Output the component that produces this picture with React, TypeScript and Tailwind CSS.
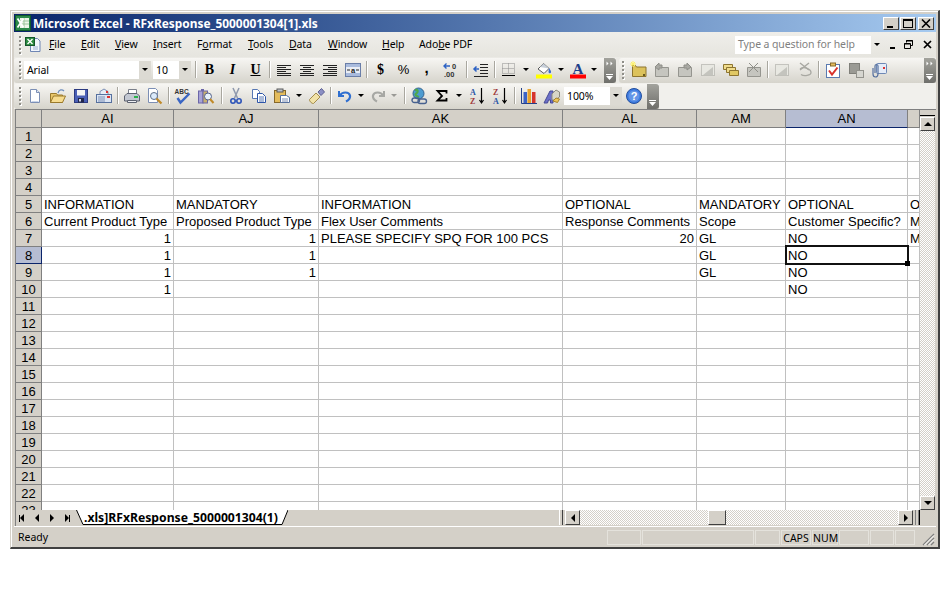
import type { ReactNode } from "react";

const COLS = [
  { name: "AI", w: "w-[132px]" },
  { name: "AJ", w: "w-[145px]" },
  { name: "AK", w: "w-[244px]" },
  { name: "AL", w: "w-[134px]" },
  { name: "AM", w: "w-[89px]" },
  { name: "AN", w: "w-[122px]" },
  { name: "", w: "w-[12px]" },
];

type Cell = string | { n: string };

const ROWS: Record<number, Cell[]> = {
  5: ["INFORMATION", "MANDATORY", "INFORMATION", "OPTIONAL", "MANDATORY", "OPTIONAL", "O"],
  6: ["Current Product Type", "Proposed Product Type", "Flex User Comments", "Response Comments", "Scope", "Customer Specific?", "M"],
  7: [{ n: "1" }, { n: "1" }, "PLEASE SPECIFY SPQ FOR 100 PCS", { n: "20" }, "GL", "NO", "M"],
  8: [{ n: "1" }, { n: "1" }, "", "", "GL", "NO", ""],
  9: [{ n: "1" }, { n: "1" }, "", "", "GL", "NO", ""],
  10: [{ n: "1" }, "", "", "", "", "NO", ""],
};

const ROW_NUMBERS = Array.from({ length: 23 }, (_, i) => i + 1);

function Ico({ children }: { children: ReactNode }) {
  return (
    <svg width="16" height="16" viewBox="0 0 16 16" className="block shrink-0 overflow-visible">
      {children}
    </svg>
  );
}

function Btn({ children, w = "w-[23px]" }: { children: ReactNode; w?: string }) {
  return <div className={`flex h-full shrink-0 items-center justify-center ${w}`}>{children}</div>;
}

function Sep() {
  return <div className="mx-[2px] h-[17px] w-[1px] shrink-0 bg-[#a9a79f] shadow-[1px_0_0_#fff]" />;
}

function Caret({ w = "w-[12px]", light = false }: { w?: string; light?: boolean }) {
  return (
    <div className={`flex h-full shrink-0 items-center justify-center ${w}`}>
      <div className={`h-0 w-0 border-x-[3px] border-t-[3px] border-x-transparent ${light ? "border-t-[#9a9a96]" : "border-t-black"}`} />
    </div>
  );
}

function Gripper({ mr = "mr-[3px]" }: { mr?: string }) {
  return (
    <div className={`ml-[3px] flex shrink-0 flex-col gap-[2px] ${mr}`}>
      {[0, 1, 2, 3, 4].map((i) => (
        <div key={i} className="h-[2px] w-[2px] bg-[#8f8e88] shadow-[1px_1px_0_#fff]" />
      ))}
    </div>
  );
}

function Chevron({ small = false }: { small?: boolean }) {
  return (
    <div className="-mb-[2px] flex h-[25px] w-[12px] shrink-0 justify-center rounded-r-[3px] bg-gradient-to-b from-[#a3a39d] to-[#6f6f6b]">
      <svg width="12" height="25" viewBox="0 0 12 25" className="block">
        {!small && <path d="M2.500 3.500l2 2-2 2zM6.500 3.500l2 2-2 2z" fill="#fff" />}
        <path d="M2 16.500h7" stroke="#fff" />
        <path d="M2 18h7l-3.500 4z" fill="#fff" />
      </svg>
    </div>
  );
}

function Combo({ w, label }: { w: string; label: string }) {
  return (
    <div className={`flex h-[18px] shrink-0 items-stretch bg-white ${w}`}>
      <div className="flex-1 pl-[3px] font-['Noto_Sans',sans-serif] text-[10.5px] leading-[18px] tracking-[-0.1px] text-black">{label}</div>
      <div className="flex w-[12px] items-center justify-center bg-[#dcdad3]">
        <div className="h-0 w-0 border-x-[3px] border-t-[3px] border-x-transparent border-t-black" />
      </div>
    </div>
  );
}

/* ---- icons, office 2003 look ---- */
const IconNew = () => (
  <Ico>
    <path d="M3.500 1.500h6l3 3v10h-9z" fill="#fff" stroke="#7c8fb5" />
    <path d="M9.500 1.500v3h3" fill="#dfe7f5" stroke="#7c8fb5" />
    <path d="M4.500 13.500h7" stroke="#c6d3ea" />
  </Ico>
);
const IconOpen = () => (
  <Ico>
    <path d="M.5 14.500v-9h6l1 1.500h5v7.500z" fill="#e8c66a" stroke="#9a7a2c" />
    <path d="M.5 14.500l3-6.500h12l-3 6.500z" fill="#f7dc8f" stroke="#9a7a2c" />
    <path d="M8 5c1-3.500 4-4 6-2" fill="none" stroke="#6f8fbd" strokeWidth="1.300" />
  </Ico>
);
const IconSave = () => (
  <Ico>
    <rect x="1.500" y="1.500" width="13" height="13" fill="#4a5fb5" stroke="#2c3a80" />
    <rect x="4" y="2" width="8" height="5.500" fill="#f4f4f4" />
    <rect x="5" y="10" width="6" height="4.500" fill="#20264a" />
    <rect x="6" y="11" width="2" height="2.500" fill="#cfd3e5" />
  </Ico>
);
const IconMail = () => (
  <Ico>
    <path d="M4 7V3.500l4-2.500 4 2.500V7" fill="#e7edf6" stroke="#7c8fb5" />
    <rect x="10" y="3" width="2" height="2" fill="#d33" />
    <rect x=".5" y="6.500" width="15" height="8" fill="#dbe5f4" stroke="#56709e" />
    <path d="M2 9h7M2 11h7M2 13h7" stroke="#7c8fb5" />
    <rect x="11" y="8" width="3" height="2" fill="#d33" />
  </Ico>
);
const IconPrint = () => (
  <Ico>
    <path d="M4.500 6.500V1.500h8v5" fill="#fff" stroke="#7a7f8a" />
    <path d="M.5 8l2.500-2.500h10L15.500 8v5H.5z" fill="#c3c8d2" stroke="#5c6270" />
    <rect x="10" y="8" width="4" height="2" fill="#29b34a" />
    <path d="M3.500 12.500h9v2h-9z" fill="#eef0f4" stroke="#5c6270" />
  </Ico>
);
const IconPreview = () => (
  <Ico>
    <path d="M1.500 .5h7l2 2v12h-9z" fill="#fff" stroke="#7c8fb5" />
    <circle cx="7" cy="8" r="3.500" fill="#dbeafa" stroke="#5f6f88" />
    <path d="M9.500 10.500l5 5" stroke="#c08a2a" strokeWidth="2.200" />
  </Ico>
);
const IconSpell = () => (
  <Ico>
    <text x="-.5" y="5.500" fontFamily="Liberation Sans" fontSize="6.500" fontWeight="700" fill="#333">ABC</text>
    <path d="M2.500 10l3 4.500 9-9" fill="none" stroke="#3a66c4" strokeWidth="2.400" />
  </Ico>
);
const IconResearch = () => (
  <Ico>
    <rect x=".5" y="3" width="4.500" height="12" fill="#a7a3d6" stroke="#6b66a8" />
    <rect x="5" y="3" width="4.500" height="12" fill="#c7b06e" stroke="#6b66a8" />
    <rect x="3" y="1" width="3" height="2" fill="#6b66a8" />
    <circle cx="10" cy="8.500" r="3.500" fill="#e7f2fb" stroke="#55628a" />
    <path d="M12 11l3.500 4" stroke="#c08a2a" strokeWidth="2" />
  </Ico>
);
const IconCut = () => (
  <Ico>
    <path d="M5 0l4.500 10M11 0L6.500 10" stroke="#8f99ad" strokeWidth="1.500" />
    <circle cx="5" cy="13" r="2.200" fill="none" stroke="#2e55b8" strokeWidth="1.600" />
    <circle cx="11" cy="13" r="2.200" fill="none" stroke="#2e55b8" strokeWidth="1.600" />
  </Ico>
);
const IconCopy = () => (
  <Ico>
    <path d="M1.500 1.500h5l2 2v7h-7z" fill="#fff" stroke="#5878b4" />
    <path d="M6.500 5.500h5l3 3v6h-8z" fill="#fff" stroke="#2d55a8" />
    <path d="M8 9h5M8 11h5M8 13h5" stroke="#5878b4" />
  </Ico>
);
const IconPaste = () => (
  <Ico>
    <rect x=".5" y="2.500" width="11" height="12" fill="#e4bc5c" stroke="#86682a" />
    <rect x="3" y="1" width="6" height="3" fill="#bfc4cc" stroke="#5a5a5a" />
    <path d="M6.500 7.500h6l3 2v5h-9z" fill="#fff" stroke="#56709e" />
    <path d="M8 11h6M8 13h6" stroke="#7c8fb5" />
  </Ico>
);
const IconPainter = () => (
  <Ico>
    <path d="M.5 11.500L7 5l4 4-6.500 6.500c-1.500 .5-4.500-2.500-4-4z" fill="#f1e2a8" stroke="#a38c4d" />
    <path d="M9 4l3.500-3.500L15.500 4 12 7.500z" fill="#8b8fc4" stroke="#5c5f92" />
  </Ico>
);
const IconUndo = ({ gray = false }: { gray?: boolean }) => {
  const c = gray ? "#a7a8a4" : "#2f6fd0";
  return (
    <Ico>
      <path d="M2 3v5h5" fill="none" stroke={c} strokeWidth="2" />
      <path d="M3 7.500C5 3.500 12 3.500 13 7.500c.5 2.500-1 4.500-4 6" fill="none" stroke={c} strokeWidth="2.200" />
    </Ico>
  );
};
const IconRedo = () => (
  <div className="-scale-x-100">
    <IconUndo gray />
  </div>
);
const IconLink = () => (
  <Ico>
    <circle cx="7.500" cy="5.500" r="5.500" fill="#4d9bd0" stroke="#33638f" />
    <path d="M4 2.500c2-1.500 3 0 2.500 1.500S4 5.500 4.500 7 7 7.500 7.500 9.500" fill="none" stroke="#4fa84a" strokeWidth="2.200" />
    <rect x="1" y="10" width="7.500" height="4.500" rx="2.200" fill="none" stroke="#47618f" strokeWidth="1.400" />
    <rect x="7" y="11" width="8.500" height="4.500" rx="2.200" fill="none" stroke="#47618f" strokeWidth="1.400" />
  </Ico>
);
const IconSigma = () => (
  <Ico>
    <path d="M12.500 5.500V3h-9L8 8l-4.500 4.500h9V10" fill="none" stroke="#000" strokeWidth="1.800" />
  </Ico>
);
const IconSort = ({ top, bottom }: { top: string; bottom: string }) => (
  <Ico>
    <text x="0" y="6.500" fontFamily="Liberation Serif" fontSize="8" fontWeight="700" fill={top === "A" ? "#2b54a6" : "#a03a3a"}>{top}</text>
    <text x="0" y="15.500" fontFamily="Liberation Serif" fontSize="8" fontWeight="700" fill={top === "A" ? "#a03a3a" : "#2b54a6"}>{bottom}</text>
    <path d="M11.500 0v14.500M9.500 12l2 3 2-3" fill="none" stroke="#000" strokeWidth="1.200" />
  </Ico>
);
const IconChart = () => (
  <Ico>
    <path d="M.5 0v15.500H16" fill="none" stroke="#24408a" />
    <rect x="2.500" y="4" width="3.500" height="11" fill="#3c63c6" />
    <rect x="6.500" y="1" width="3.500" height="14" fill="#e8a22c" />
    <rect x="11" y="4" width="3.500" height="11" fill="#d6342c" />
  </Ico>
);
const IconDrawing = () => (
  <Ico>
    <path d="M0 15L6 3h3v12H6.500v-3H4.500L3.500 15z" fill="#6c70c8" stroke="#474a94" />
    <path d="M8 6l4-4 3.500 2v5L11 12H8z" fill="#d8d6c8" stroke="#8d8b7e" />
    <path d="M9 13l3-3 3.500 1-2 3.500z" fill="#eec65a" stroke="#a8842c" />
  </Ico>
);
const IconHelp = () => (
  <Ico>
    <circle cx="8" cy="8" r="7.500" fill="#3d7be0" stroke="#24509f" />
    <circle cx="8" cy="8" r="5.500" fill="#fff" fillOpacity="0.2" />
    <text x="8" y="12" textAnchor="middle" fontFamily="Liberation Sans" fontSize="11" fontWeight="700" fill="#fff">?</text>
  </Ico>
);
const IconAlign = ({ a }: { a: "l" | "c" | "r" }) => {
  const short = a === "l" ? "M1 5.500h9M1 9.500h9" : a === "c" ? "M4 5.500h8M4 9.500h8" : "M6 5.500h9M6 9.500h9";
  return (
    <Ico>
      <path d={`M1 3.500h14M1 7.500h14M1 11.500h14M1 13.500h14 ${short}`} stroke="#222" />
    </Ico>
  );
};
const IconMerge = () => (
  <Ico>
    <rect x=".5" y="1.500" width="15" height="13" fill="#e9edf5" stroke="#6a7ea8" />
    <rect x="1" y="2" width="14" height="3" fill="#a9bbdd" />
    <rect x="1" y="11" width="14" height="3" fill="#a9bbdd" />
    <path d="M2 8h3M14 8h-3" stroke="#222" />
    <text x="8" y="10.500" textAnchor="middle" fontFamily="Liberation Sans" fontSize="7.500" fontWeight="700" fill="#222">a</text>
  </Ico>
);
const IconDecimals = () => (
  <Ico>
    <path d="M1 4h6M3.500 1.500L1 4l2.500 2.500" fill="none" stroke="#2d62c4" strokeWidth="1.400" />
    <text x="9" y="7" fontFamily="Liberation Sans" fontSize="7.500" fontWeight="700" fill="#333">0</text>
    <text x="1" y="15" fontFamily="Liberation Sans" fontSize="7.500" fontWeight="700" fill="#333">.00</text>
  </Ico>
);
const IconIndent = () => (
  <Ico>
    <path d="M7 2.500h8M7 5.500h8M7 8.500h8M7 11.500h8M1 14.500h14" stroke="#222" />
    <path d="M6 7H1.500M3.500 4.500L1 7l2.500 2.500" fill="none" stroke="#2d62c4" strokeWidth="1.500" />
  </Ico>
);
const IconBorders = () => (
  <Ico>
    <path d="M1.500 1.500h12v10h-12zM7.500 1.500v10M1.500 6.500h12" fill="none" stroke="#8d8d8d" strokeDasharray="1 1" />
    <path d="M1 13.500h13" stroke="#000" />
  </Ico>
);
const IconFill = () => (
  <Ico>
    <path d="M2 7L7.500 1.500 13 6.500 8 11.500z" fill="#fff" stroke="#5a5a5a" />
    <path d="M4 5l3.500-3.500L13 6.500z" fill="#c7cfd9" />
    <path d="M13 6c1 1.500 2.500 3 2 4.500s-2.500 .5-2.500-.5z" fill="#3a6cc8" />
    <rect x="0" y="12.500" width="16" height="4" fill="#ffff00" />
  </Ico>
);
const IconFontColor = () => (
  <Ico>
    <text x="8" y="11.500" textAnchor="middle" fontFamily="Liberation Serif" fontSize="15" fontWeight="700" fill="#1f3f8a">A</text>
    <rect x="0" y="12.500" width="16" height="4" fill="#ff0000" />
  </Ico>
);
const IconFolderNew = () => (
  <Ico>
    <path d="M1.500 3.500h3l1 1.500h9.500v9.500H1.500z" fill="#dcc25c" stroke="#8d7530" />
    <path d="M0 0l4 4M4 0L0 4M2 -1v6M-1 2h6" stroke="#fff36a" />
    <rect x="12" y="12" width="2" height="2" fill="#6a5a20" />
  </Ico>
);
const GrayFolder = ({ d }: { d: string }) => (
  <Ico>
    <path d="M1.500 5.500h13v9h-13z" fill="#c5c5bf" stroke="#95958f" />
    <path d={d} fill="#a9a9a3" stroke="#8e8e88" />
  </Ico>
);
const IconFolders = () => (
  <Ico>
    <path d="M.5 2.500h9v5h-9z" fill="#f0dc8c" stroke="#8d7530" />
    <path d="M3.500 5.500h9v5h-9z" fill="#f0dc8c" stroke="#8d7530" />
    <path d="M6.500 8.500h9v5h-9z" fill="#e0c864" stroke="#8d7530" />
  </Ico>
);
const IconDashBox = () => (
  <Ico>
    <rect x="1.500" y="2.500" width="13" height="11" fill="#e8e8e2" stroke="#9c9c96" strokeDasharray="1 1" />
    <path d="M3 13l10-8v8z" fill="#c4c4be" />
  </Ico>
);
const IconX = () => (
  <Ico>
    <path d="M3 1l9 7M12 1L3 8" stroke="#a8a8a2" strokeWidth="1.400" />
    <path d="M3 7c4-3 11 0 11 3.500 0 3-7 4-10 2" fill="none" stroke="#a8a8a2" strokeWidth="1.300" />
  </Ico>
);
const IconCheck = () => (
  <Ico>
    <rect x="1.500" y="2.500" width="13" height="13" fill="#fff" stroke="#5a7ab0" />
    <rect x="5.500" y="1" width="5" height="3" fill="#e4bc5c" stroke="#86682a" />
    <path d="M4 8.500l3 4 5.500-7" fill="none" stroke="#d8322c" strokeWidth="2" />
  </Ico>
);
const IconSaveGray = () => (
  <Ico>
    <rect x="1.500" y="1.500" width="10" height="10" fill="#9a9a94" stroke="#7f7f79" />
    <rect x="8.500" y="8.500" width="7" height="7" fill="#d6d6d0" stroke="#93938d" />
  </Ico>
);
const IconAttach = () => (
  <Ico>
    <rect x="5.500" y="1.500" width="10" height="10" rx="1" fill="#e4ecf8" stroke="#6e88b5" />
    <rect x="12" y="5" width="2" height="2" fill="#d33" />
    <path d="M2 6v6c0 4 5 4 5 0V4c0-2-3-2-3 0v7" fill="none" stroke="#56709e" strokeWidth="1.200" />
  </Ico>
);
const IconExcelDoc = () => (
  <Ico>
    <path d="M5.500 1.500h7l2.500 2.500v10.500h-9.500z" fill="#f2f6fc" stroke="#6f86b4" />
    <path d="M8 10h5M8 12h5" stroke="#9db0d2" />
    <rect x=".5" y=".5" width="9" height="8" fill="#2b8a3f" stroke="#14552a" />
    <path d="M2.500 2l5 5M7.500 2l-5 5" stroke="#fff" strokeWidth="1.400" />
  </Ico>
);

function WinBtn({ children }: { children: ReactNode }) {
  return (
    <div className="flex h-[13px] w-[16px] shrink-0 items-center justify-center border border-t-white border-r-[#404040] border-b-[#404040] border-l-white bg-[#d4d0c8]">
      {children}
    </div>
  );
}

function ScrollBtn({ children, w = "w-[15px]", h = "h-[14px]" }: { children?: ReactNode; w?: string; h?: string }) {
  return (
    <div className={`flex shrink-0 items-center justify-center border border-t-white border-r-[#404040] border-b-[#404040] border-l-white bg-[#d4d0c8] ${w} ${h}`}>
      {children}
    </div>
  );
}

const DITHER = "bg-[repeating-conic-gradient(#fff_0%_25%,#d4d0c8_0%_50%)] bg-[length:2px_2px]";

function Tri({ dir }: { dir: "up" | "down" | "left" | "right" }) {
  if (dir === "up") return <div className="h-0 w-0 border-x-[4px] border-b-[4px] border-x-transparent border-b-black" />;
  if (dir === "down") return <div className="h-0 w-0 border-x-[4px] border-t-[4px] border-x-transparent border-t-black" />;
  if (dir === "left") return <div className="h-0 w-0 border-y-[4px] border-r-[4px] border-y-transparent border-r-black" />;
  return <div className="h-0 w-0 border-y-[4px] border-l-[4px] border-y-transparent border-l-black" />;
}

function GridRow({ num }: { num: number }) {
  const cells = ROWS[num] ?? [];
  const active = num === 8;
  return (
    <div className="flex h-[17px] shrink-0">
      <div
        className={`w-[26px] shrink-0 border-r border-b text-center text-[13px] leading-[17px] ${
          active ? "border-[#0a246a] bg-[#b6bdd2]" : "border-[#808080] bg-[#d4d0c8]"
        }`}
      >
        {num}
      </div>
      {COLS.map((c, i) => {
        const v = cells[i] ?? "";
        const isNum = typeof v === "object";
        const selected = active && c.name === "AN";
        return (
          <div
            key={i}
            className={`relative shrink-0 border-r border-b border-[#c0c0c0] px-[2px] text-[13px] leading-[17px] whitespace-nowrap ${c.w} ${
              isNum ? "text-right" : "text-left"
            } ${selected ? "" : "overflow-hidden"}`}
          >
            {isNum ? v.n : v}
            {selected && (
              <div className="absolute -top-[2px] -right-[2px] -bottom-[2px] -left-[1px] z-10 border-2 border-[#111]">
                <div className="absolute -right-[3px] -bottom-[3px] h-[5px] w-[5px] bg-black" />
              </div>
            )}
          </div>
        );
      })}
    </div>
  );
}

export default function App() {
  return (
    <div className="h-[595px] w-[950px] overflow-hidden bg-white px-[10px] pt-[10px] font-['Liberation_Sans',sans-serif] text-black">
      {/* window frame */}
      <div className="flex h-[539px] w-[930px] flex-col border-t border-r-2 border-b-2 border-l border-t-[#d4d0c8] border-r-[#404040] border-b-[#404040] border-l-[#d4d0c8] bg-[#d4d0c8] pt-[3px] pr-[2px] pl-[3px] shadow-[inset_1px_1px_0_#fff]">
        {/* title bar */}
        <div className="flex h-[18px] shrink-0 items-center bg-gradient-to-r from-[#0a246a] to-[#a6caf0] pr-[2px] pl-[1px]">
          <svg width="16" height="16" viewBox="0 0 16 16" className="mr-[2px] shrink-0">
            <rect x=".5" y=".5" width="15" height="15" fill="#2d8a4a" stroke="#0f5a2a" />
            <rect x="5" y="3" width="9" height="10" fill="#eef6ea" />
            <path d="M5 6h9M5 9h9M9 3v10" stroke="#9cc59c" />
            <path d="M2.500 3.500l6 9M8.500 3.500l-6 9" stroke="#fff" strokeWidth="1.800" />
          </svg>
          <div className="flex-1 truncate font-['Noto_Sans',sans-serif] text-[11.9px] leading-[18px] font-bold text-white">
            Microsoft Excel - RFxResponse_5000001304[1].xls
          </div>
          <div className="flex items-center gap-[1px]">
            <WinBtn>
              <div className="mt-[7px] mr-[3px] h-[2px] w-[6px] bg-black" />
            </WinBtn>
            <WinBtn>
              <div className="h-[9px] w-[10px] border border-t-2 border-black" />
            </WinBtn>
            <div className="ml-[1px]">
              <WinBtn>
                <svg width="10" height="9" viewBox="0 0 10 9">
                  <path d="M1 .5l8 8M9 .5l-8 8" stroke="#000" strokeWidth="1.600" />
                </svg>
              </WinBtn>
            </div>
          </div>
        </div>

        {/* menu bar */}
        <div className="flex h-[25px] shrink-0 items-center bg-gradient-to-b from-[#efeeea] to-[#e6e5df] pl-[2px] font-['Noto_Sans',sans-serif] text-[10.5px] tracking-[-0.1px]">
          <Gripper mr="mr-[4px]" />
          <IconExcelDoc />
          <div className="ml-[8px] flex">
            <span className="w-[32px]"><u>F</u>ile</span>
            <span className="w-[34px]"><u>E</u>dit</span>
            <span className="w-[38px]"><u>V</u>iew</span>
            <span className="w-[44px]"><u>I</u>nsert</span>
            <span className="w-[51px]">F<u>o</u>rmat</span>
            <span className="w-[41px]"><u>T</u>ools</span>
            <span className="w-[39px]"><u>D</u>ata</span>
            <span className="w-[54px]"><u>W</u>indow</span>
            <span className="w-[37px]"><u>H</u>elp</span>
            <span>Ado<u>b</u>e PDF</span>
          </div>
          <div className="ml-auto flex h-[18px] items-center">
            <div className="flex h-[18px] w-[136px] items-center bg-white pl-[3px] text-[#7f7f7f]">Type a question for help</div>
            <Caret />
            <div className="ml-[2px] flex h-full w-[14px] items-center justify-center">
              <div className="mt-[6px] h-[2px] w-[5px] bg-black" />
            </div>
            <div className="ml-[2px] flex h-full w-[14px] items-center justify-center">
              <svg width="9" height="9" viewBox="0 0 9 9">
                <path d="M2.500 2.500V.5h6v5h-2M.5 3.500h6v5h-6z" fill="none" stroke="#000" />
                <path d="M2 1h7M0 4h6" stroke="#000" />
              </svg>
            </div>
            <div className="mr-[2px] ml-[5px] flex h-full w-[14px] items-center justify-center">
              <svg width="9" height="9" viewBox="0 0 9 9">
                <path d="M1 1l7 7M8 1L1 8" stroke="#000" strokeWidth="1.700" />
              </svg>
            </div>
          </div>
        </div>

        {/* formatting toolbar + extra toolbar */}
        <div className="flex h-[26px] shrink-0 items-stretch bg-[#ebeae5] pt-[1px]">
          <div className="flex w-[602px] shrink-0 items-center rounded-l-[3px] bg-gradient-to-b from-[#f7f6f3] to-[#d6d4cc] pb-[2px] pl-[2px]">
            <Gripper />
            <Combo w="w-[127px]" label="Arial" />
            <div className="w-[2px]" />
            <Combo w="w-[38px]" label="10" />
            <div className="w-[2px]" />
            <Sep />
            <Btn><span className="font-['Liberation_Serif',serif] text-[14px] font-bold">B</span></Btn>
            <Btn><span className="font-['Liberation_Serif',serif] text-[14px] font-bold italic">I</span></Btn>
            <Btn><span className="font-['Liberation_Serif',serif] text-[14px] font-bold underline">U</span></Btn>
            <Sep />
            <Btn><IconAlign a="l" /></Btn>
            <Btn><IconAlign a="c" /></Btn>
            <Btn><IconAlign a="r" /></Btn>
            <Btn><IconMerge /></Btn>
            <Sep />
            <Btn><span className="font-['Liberation_Serif',serif] text-[14px] font-bold">$</span></Btn>
            <Btn><span className="text-[13px]">%</span></Btn>
            <Btn><span className="-mt-[3px] text-[15px] font-bold">,</span></Btn>
            <Btn w="w-[26px]"><IconDecimals /></Btn>
            <Sep />
            <Btn><IconIndent /></Btn>
            <Sep />
            <Btn><IconBorders /></Btn>
            <Caret />
            <Btn><IconFill /></Btn>
            <Caret w="w-[11px]" />
            <Btn><IconFontColor /></Btn>
            <Caret w="w-[10px]" />
            <div className="ml-auto"><Chevron /></div>
          </div>
          <div className="w-[3px] shrink-0" />
          <div className="flex flex-1 items-center rounded-l-[3px] bg-gradient-to-b from-[#f7f6f3] to-[#d6d4cc] pb-[2px]">
            <Gripper />
            <Btn><IconFolderNew /></Btn>
            <Btn><GrayFolder d="M1 5l4-4v2h3v3H5v2z" /></Btn>
            <Btn><GrayFolder d="M14 5l-4-4v2H7v3h3v2z" /></Btn>
            <Btn><IconDashBox /></Btn>
            <Btn><IconFolders /></Btn>
            <Btn><GrayFolder d="M3 1l9 9M12 1l-9 9" /></Btn>
            <Sep />
            <Btn><IconDashBox /></Btn>
            <Btn><IconX /></Btn>
            <Sep />
            <Btn><IconCheck /></Btn>
            <Btn><IconSaveGray /></Btn>
            <Btn><IconAttach /></Btn>
            <div className="ml-auto"><Chevron /></div>
          </div>
        </div>

        {/* standard toolbar */}
        <div className="flex h-[26px] shrink-0 items-stretch bg-[#f1f0ec] pt-[1px]">
          <div className="flex w-[645px] shrink-0 items-center rounded-l-[3px] bg-gradient-to-b from-[#f7f6f3] to-[#d6d4cc] pb-[2px] pl-[2px]">
            <Gripper mr="mr-[2px]" />
            <Btn><IconNew /></Btn>
            <Btn><IconOpen /></Btn>
            <Btn><IconSave /></Btn>
            <Btn><IconMail /></Btn>
            <Sep />
            <Btn><IconPrint /></Btn>
            <Btn><IconPreview /></Btn>
            <Sep />
            <Btn><IconSpell /></Btn>
            <Btn><IconResearch /></Btn>
            <div className="w-[2px]" />
            <Sep />
            <Btn><IconCut /></Btn>
            <Btn><IconCopy /></Btn>
            <Btn><IconPaste /></Btn>
            <Caret />
            <Btn><IconPainter /></Btn>
            <Sep />
            <Btn><IconUndo /></Btn>
            <Caret w="w-[10px]" />
            <Btn><IconRedo /></Btn>
            <Caret w="w-[10px]" light />
            <div className="w-[3px]" />
            <Sep />
            <Btn><IconLink /></Btn>
            <Btn><IconSigma /></Btn>
            <Caret />
            <div className="w-[1px]" />
            <Btn><IconSort top="A" bottom="Z" /></Btn>
            <Btn><IconSort top="Z" bottom="A" /></Btn>
            <Sep />
            <Btn><IconChart /></Btn>
            <Btn><IconDrawing /></Btn>
            <div className="w-[1px]" />
            <Combo w="w-[58px]" label="100%" />
            <Btn><IconHelp /></Btn>
            <div className="ml-auto"><Chevron small /></div>
          </div>
        </div>

        {/* sheet */}
        <div className="ml-[1px] flex min-h-0 flex-1 flex-col border-t border-l border-[#808080] bg-white">
          <div className="flex min-h-0 flex-1">
            <div className="min-w-0 flex-1 overflow-hidden">
              <div className="flex h-[18px] shrink-0 bg-[#d4d0c8] text-[13px] leading-[17px]">
                <div className="w-[26px] shrink-0 border-r border-b border-[#808080]" />
                {COLS.map((c, i) => (
                  <div
                    key={i}
                    className={`shrink-0 overflow-hidden border-r border-b border-r-[#808080] text-center ${c.w} ${
                      c.name === "AN" ? "border-b-[#0a246a] bg-[#b6bdd2]" : "border-b-[#808080]"
                    }`}
                  >
                    {c.name}
                  </div>
                ))}
              </div>
              {ROW_NUMBERS.map((n) => (
                <GridRow key={n} num={n} />
              ))}
            </div>
            {/* vertical scrollbar */}
            <div className="flex w-[16px] shrink-0 flex-col bg-[#d4d0c8]">
              <div className="mb-[1px] h-[6px] w-[15px] border-b border-black" />
              <ScrollBtn><Tri dir="up" /></ScrollBtn>
              <div className={`min-h-0 w-[15px] flex-1 ${DITHER}`} />
              <ScrollBtn><Tri dir="down" /></ScrollBtn>
            </div>
          </div>
          {/* tabs + horizontal scrollbar */}
          <div className="flex h-[16px] shrink-0 bg-[#d4d0c8]">
            <div className="flex w-[60px] shrink-0 items-center pl-0">
              <div className="-ml-[2px] flex w-[15px] items-center justify-center">
                <span className="h-[7px] w-[1px] bg-black" />
                <Tri dir="left" />
              </div>
              <div className="flex w-[15px] items-center justify-center"><Tri dir="left" /></div>
              <div className="flex w-[15px] items-center justify-center"><Tri dir="right" /></div>
              <div className="ml-[1px] flex w-[15px] items-center justify-center">
                <Tri dir="right" />
                <span className="h-[7px] w-[1px] bg-black" />
              </div>
            </div>
            <div className="relative h-[15px] w-[212px] shrink-0">
              <svg width="212" height="15" viewBox="0 0 212 15" className="absolute inset-0">
                <path d="M.5 0l6.500 14.500h199L212 0z" fill="#fff" />
                <path d="M.5 0l6.500 14.500h199L212 0" fill="none" stroke="#000" />
              </svg>
              <div className="relative pl-[8px] font-['Noto_Sans',sans-serif] text-[12.2px] leading-[16px] font-bold whitespace-nowrap">
                .xls]RFxResponse_5000001304(1)
              </div>
            </div>
            <div className="ml-[271px] flex min-w-0 flex-1 items-start">
              <div className="h-[15px] w-[4px] shrink-0 border-r border-l border-r-[#404040] border-l-white" />
              <div className="w-[2px] shrink-0" />
              <ScrollBtn h="h-[15px]"><Tri dir="left" /></ScrollBtn>
              <div className={`h-[15px] min-w-0 flex-[129] ${DITHER}`} />
              <ScrollBtn w="w-[18px]" h="h-[15px]" />
              <div className={`h-[15px] min-w-0 flex-[173] ${DITHER}`} />
              <ScrollBtn h="h-[15px]"><Tri dir="right" /></ScrollBtn>
              <div className="ml-[2px] h-[15px] w-[4px] shrink-0 border-x border-x-[#808080]" />
              <div className="h-[15px] w-[17px] shrink-0 border-l border-black" />
            </div>
          </div>
        </div>

        {/* status bar */}
        <div className="flex h-[21px] shrink-0 items-center border-t border-white bg-[#d4d0c8] pl-[4px] font-['Noto_Sans',sans-serif] text-[10.5px]">
          <div className="flex-1 pt-[2px]">Ready</div>
          <div className="flex h-[15px] items-stretch gap-[1px] text-center leading-[14px] whitespace-nowrap">
            <div className="w-[34px] border border-[#e4e2dc]" />
            <div className="w-[112px] border border-[#e4e2dc]" />
            <div className="w-[25px] border border-[#e4e2dc]" />
            <div className="w-[30px] border border-[#e4e2dc]">CAPS</div>
            <div className="w-[26px] border border-[#e4e2dc]">NUM</div>
            <div className="w-[30px] border border-[#e4e2dc]" />
            <div className="w-[24px] border border-[#e4e2dc]" />
            <div className="w-[20px] border border-[#e4e2dc]" />
          </div>
          <svg width="21" height="18" viewBox="0 0 21 18" className="shrink-0 self-end">
            <path d="M19 5L8 16M19 9l-7 7M19 13l-3 3" stroke="#808080" strokeWidth="1.300" />
            <path d="M19 6.500L9.500 16M19 10.500L13.500 16" stroke="#fff" />
          </svg>
        </div>
      </div>
    </div>
  );
}
